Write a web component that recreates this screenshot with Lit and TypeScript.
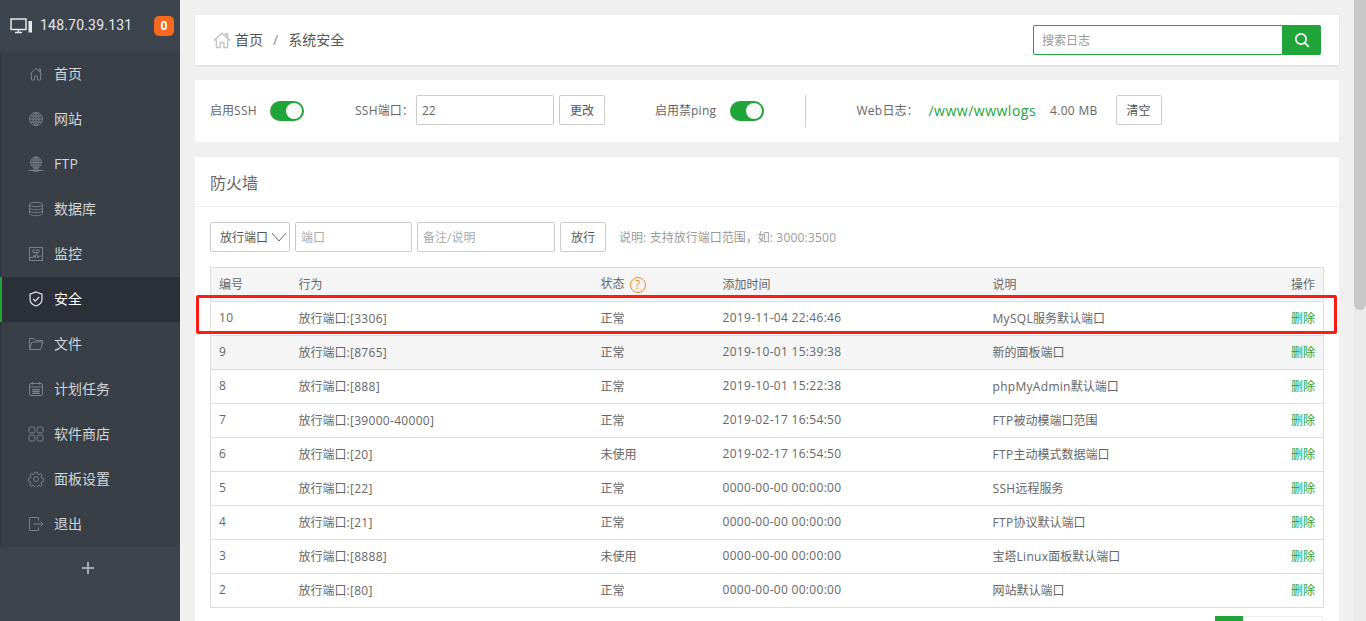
import { LitElement, html, css, svg } from "lit";
import { customElement } from "lit/decorators.js";

const ICONS: Record<string, any> = {
  home: svg`<path d="M1.500 8.500 8 2.500l6.500 6M3.500 7.500v6.500h3v-4h3v4h3V7.500M11 3v2.200l1.500 1.300V3z"/>`,
  globe: svg`<circle cx="8" cy="8" r="6.500"/><ellipse cx="8" cy="8" rx="3" ry="6.500"/><path d="M8 1.500v13M1.500 8h13M2.400 5h11.200M2.400 11h11.200"/>`,
  ftp: svg`<circle cx="8" cy="6.500" r="5.500"/><ellipse cx="8" cy="6.500" rx="2.500" ry="5.500"/><path d="M8 1v11M2.500 6.500h11M3.200 4h9.600M3.200 9h9.600M.5 14.500h15"/><rect x="6" y="12.800" width="4" height="2.400"/>`,
  db: svg`<ellipse cx="8" cy="3.500" rx="6.500" ry="2.200"/><path d="M1.500 3.500v9c0 1.200 2.900 2.200 6.500 2.200s6.500-1 6.500-2.200v-9M1.500 6.500c0 1.200 2.900 2.200 6.500 2.200s6.500-1 6.500-2.200M1.500 9.500c0 1.200 2.900 2.200 6.500 2.200s6.500-1 6.500-2.200"/>`,
  monitor: svg`<rect x="1.500" y="1.500" width="13" height="13"/><path d="M2 11.500h3l1-2.500 1 3 1.500-5 1.500 5 1-2h2.500M5 4h6v2.500H5z"/>`,
  shield: svg`<path d="M8 1 14 3.200v5c0 3.300-2.500 5.500-6 6.800-3.500-1.300-6-3.500-6-6.800v-5z"/><path d="m5 7.800 2.300 2.300L11.200 6"/>`,
  folder: svg`<path d="M1.500 13.500V2.500h4.500l1.500 2h7v1.500M1.500 13.500h11l2.500-7.500H4z"/>`,
  calendar: svg`<rect x="1.500" y="2.500" width="13" height="12" rx="1.500"/><path d="M1.500 6h13M4.500 1v2.500M11.500 1v2.500M4 8.500h8M4 10.500h8M4 12.500h8M6 8v5M8 8v5M10 8v5"/>`,
  apps: svg`<rect x="1" y="1" width="5.800" height="5.800" rx="1.300"/><rect x="9.200" y="1" width="5.800" height="5.800" rx="1.300"/><rect x="1" y="9.200" width="5.800" height="5.800" rx="1.300"/><rect x="9.200" y="9.200" width="5.800" height="5.800" rx="1.300"/>`,
  gear: svg`<circle cx="8" cy="8" r="2.500"/><path d="m6.800 1.200h2.400l.4 1.900 1.400.6 1.700-1 1.500 1.700-1 1.600.6 1.400 1.700.4v2.400l-1.700.4-.6 1.400 1 1.600-1.500 1.700-1.700-1-1.400.6-.4 1.900H6.800l-.4-1.900-1.400-.6-1.700 1-1.500-1.700 1-1.600-.6-1.400-1.700-.4V7.400l1.700-.4.6-1.400-1-1.600 1.500-1.700 1.700 1 1.400-.6z"/>`,
  logout: svg`<path d="M10.500 4.500V1.500h-9v13h9v-3M5.500 8h9.500M12.500 5.500 15 8l-2.500 2.500"/>`,
};

const NAV = [
  ["home", "首页"], ["globe", "网站"], ["ftp", "FTP"], ["db", "数据库"], ["monitor", "监控"],
  ["shield", "安全"], ["folder", "文件"], ["calendar", "计划任务"], ["apps", "软件商店"], ["gear", "面板设置"], ["logout", "退出"],
];

const ROWS = [
  ["10", "放行端口:[3306]", "正常", "2019-11-04 22:46:46", "MySQL服务默认端口"],
  ["9", "放行端口:[8765]", "正常", "2019-10-01 15:39:38", "新的面板端口"],
  ["8", "放行端口:[888]", "正常", "2019-10-01 15:22:38", "phpMyAdmin默认端口"],
  ["7", "放行端口:[39000-40000]", "正常", "2019-02-17 16:54:50", "FTP被动模端口范围"],
  ["6", "放行端口:[20]", "未使用", "2019-02-17 16:54:50", "FTP主动模式数据端口"],
  ["5", "放行端口:[22]", "正常", "0000-00-00 00:00:00", "SSH远程服务"],
  ["4", "放行端口:[21]", "正常", "0000-00-00 00:00:00", "FTP协议默认端口"],
  ["3", "放行端口:[8888]", "未使用", "0000-00-00 00:00:00", "宝塔Linux面板默认端口"],
  ["2", "放行端口:[80]", "正常", "0000-00-00 00:00:00", "网站默认端口"],
];

// Latin runs render slightly wider in the reference; wrap them so only they get tracking.
const t = (s: string) =>
  s.split(/([\x20-\x7e]+)/).map((part) =>
    /^[\x20-\x7e]+$/.test(part) ? html`<span class="lat">${part}</span>` : part
  );

@customElement("app-root")
export class AppRoot extends LitElement {
  static styles = css`
    :host { display: flex; width: 1366px; height: 621px; overflow: hidden; background: #f0f0f0; color: #666;
      font: 12px "Open Sans", "Noto Sans CJK SC", sans-serif; }
    * { box-sizing: border-box; }
    .lat { letter-spacing: .3px; }
    .side { width: 180px; flex: none; background: #3c444d; display: flex; flex-direction: column; }
    .host { height: 52px; display: flex; align-items: center; padding: 0 6px 0 10px; color: #e4e7ea; font-size: 14px; font-family: Roboto, "Noto Sans CJK SC", sans-serif; }
    .host svg { width: 23px; height: 16px; margin-right: 7px; flex: none; }
    .ip { flex: 1; letter-spacing: .2px; padding-bottom: 3px; }
    .badge { flex: none; width: 20px; height: 20px; border-radius: 5px; background: #f7691f; color: #fff; font-weight: 700; font-size: 12px; display: flex; align-items: center; justify-content: center; }
    .nav { display: flex; flex-direction: column; }
    .item { height: 45px; display: flex; align-items: center; padding-left: 26px; background: #383f47; border-left: 2px solid #32383f; color: #d3d6d9; font-size: 14px; }
    .item.on { background: #2c3038; border-left-color: #20a53a; color: #fff; }
    .item svg { width: 16px; height: 16px; margin-right: 10px; flex: none; fill: none; stroke: #7b8086; stroke-width: 1; margin-bottom: 1px; }
    .item.on svg { stroke: #e6e6e6; stroke-width: 1.200; }
    .item .lbl { padding-bottom: 3px; }
    .plus { height: 44px; display: flex; align-items: center; justify-content: center; padding: 0 5px 2px 0; }
    .plus svg { width: 14px; height: 14px; }

    .main { flex: 1; padding: 15px; display: flex; flex-direction: column; gap: 15px; min-width: 0; }
    .card { background: #fff; flex: none; }
    .crumb { height: 50px; display: flex; align-items: center; padding: 0 18px 0 17px; box-shadow: 0 1px 2px rgba(0,0,0,.1); color: #555; font-size: 14px; }
    .crumb .hi { width: 20px; height: 20px; margin-right: 3px; fill: none; stroke: #c4c4c4; stroke-width: 1.100; }
    .crumb .tx { padding-bottom: 2px; }
    .crumb .sep { margin: 0 10px; color: #888; }
    .crumb .grow { flex: 1; }
    .search { width: 250px; height: 30px; border: 1px solid #20a53a; border-radius: 2px 0 0 2px; padding: 0 8px; display: flex; align-items: center; color: #999; font-size: 12px; }
    .sbtn { width: 38px; height: 30px; background: #20a53a; border-radius: 0 2px 2px 0; display: flex; align-items: center; justify-content: center; }
    .sbtn svg { width: 16px; height: 16px; fill: none; stroke: #fff; stroke-width: 1.700; }

    .opts { height: 62px; display: flex; align-items: center; padding: 0 0 2px 15px; }
    .sw { width: 34px; height: 20px; border-radius: 10px; background: #20a53a; display: flex; justify-content: flex-end; padding: 2px; box-shadow: 0 1px 1px rgba(0,0,0,.1); flex: none; margin: 2px 0 0 13px; }
    .sw.wide { margin-left: 14px; }
    .sw i { width: 16px; height: 16px; border-radius: 50%; background: #fafafa; display: block; }
    .inp { height: 30px; border: 1px solid #ccc; border-radius: 2px; padding: 0 5px; display: flex; align-items: center; flex: none; }
    .w138 { width: 138px; }
    .w117 { width: 117px; }
    .btn { height: 30px; border: 1px solid #ccc; border-radius: 2px; display: flex; align-items: center; justify-content: center; color: #555; width: 46px; flex: none; }
    .ssh { margin-left: 51px; width: 61px; }
    .ml5 { margin-left: 5px; }
    .ml50 { margin-left: 50px; }
    .weblog { margin-left: 10px; color: #20a53a; font-size: 14px; letter-spacing: .5px; }
    .size { margin-left: 14px; }
    .clear { margin-left: 18px; }
    .divider { width: 1px; height: 32px; background: #ccc; margin: 2px 50px 0 41px; }

    .title { height: 50px; border-bottom: 1px solid #eee; padding-left: 15px; display: flex; align-items: center; font-size: 16px; color: #666; }
    .tools { display: flex; align-items: center; gap: 5px; padding: 15px 15px 0; }
    .select { width: 80px; justify-content: space-between; padding: 0 0 0 9px; color: #555; }
    .select svg { width: 18px; height: 18px; fill: none; stroke: #666; margin-right: 1px; }
    .ph { color: #aaa; }
    .note { color: #999; margin-left: 8px; }
    .note .lat { letter-spacing: .2px; }

    .tablewrap { position: relative; margin: 15px 15px 0; }
    table { width: 100%; border-collapse: collapse; table-layout: fixed; border: 1px solid #ddd; }
    th, td { height: 34px; padding: 0 8px 2px; font-weight: 400; text-align: left; color: #666; border-top: 1px solid #ddd; white-space: nowrap; }
    thead tr, tr.alt { background: #f5f5f5; }
    .c1 { width: 80px; }
    .c2 { width: 302px; }
    .c3 { width: 122px; }
    .c4 { width: 270px; }
    .c6 { width: 60px; }
    .r { text-align: right; }
    td.r { color: #20a53a; }
    .q { display: inline-flex; width: 16px; height: 16px; border: 1px solid #f7891f; border-radius: 50%; color: #f7891f; align-items: center; justify-content: center; font-size: 12px; margin-left: 5px; vertical-align: middle; }
    .mark { position: absolute; left: -14px; top: 28px; width: 1141px; height: 39px; border: 3px solid #fb1c14; border-radius: 2px; pointer-events: none; }
    .pager { display: flex; justify-content: flex-end; margin: 8px 16px 0; }
    .pager b { width: 28px; height: 30px; background: #20a53a; display: block; }
    .pager i { width: 80px; height: 30px; border: 1px solid #eee; display: block; }

    .bar { width: 12px; flex: none; background: #ebebeb; }
    .thumb { height: 310px; background: #c8c8c8; border-radius: 0 0 6px 6px; }
  `;

  render() {
    return html`
      <aside class="side">
        <div class="host">
          <svg viewBox="0 0 23 16" fill="none" stroke="#e8e8e8" stroke-width="1.500"><rect x="1" y="1" width="15" height="10.500"/><path d="M5 14.500h7M8.500 11.500v3"/><rect x="18.500" y="3" width="3.500" height="11.500" fill="#e8e8e8" stroke="none"/></svg>
          <span class="ip">148.70.39.131</span>
          <span class="badge">0</span>
        </div>
        <nav class="nav">
          ${NAV.map(([icon, label]) => html`
            <div class="item ${label === "安全" ? "on" : ""}">
              <svg viewBox="0 0 16 16">${ICONS[icon]}</svg><span class="lbl">${t(label)}</span>
            </div>`)}
        </nav>
        <div class="plus"><svg viewBox="0 0 14 14" fill="#a5a9ad"><path d="M6 1h2v5h5v2H8v5H6V8H1V6h5z"/></svg></div>
      </aside>
      <main class="main">
        <section class="card crumb">
          <svg class="hi" viewBox="0 0 16 16">${ICONS.home}</svg>
          <span class="tx">首页</span><span class="tx sep">/</span><span class="tx">系统安全</span>
          <span class="grow"></span>
          <div class="search">搜索日志</div>
          <div class="sbtn"><svg viewBox="0 0 16 16"><circle cx="7" cy="7" r="5.200"/><path d="m10.800 10.800 4 4"/></svg></div>
        </section>
        <section class="card opts">
          <span>${t("启用SSH")}</span>
          <span class="sw"><i></i></span>
          <span class="ssh">${t("SSH")}端口：</span>
          <div class="inp w138">22</div>
          <div class="btn ml5">更改</div>
          <span class="ml50">${t("启用禁ping")}</span>
          <span class="sw wide"><i></i></span>
          <span class="divider"></span>
          <span>${t("Web")}日志：</span>
          <span class="weblog">/www/wwwlogs</span>
          <span class="size">${t("4.00 MB")}</span>
          <div class="btn clear">清空</div>
        </section>
        <section class="card">
          <div class="title">防火墙</div>
          <div class="tools">
            <div class="inp select">放行端口<svg viewBox="0 0 18 18"><path d="m2 5 7 8 7-8"/></svg></div>
            <div class="inp ph w117">端口</div>
            <div class="inp ph w138">备注/说明</div>
            <div class="btn">放行</div>
            <span class="note">${t("说明: 支持放行端口范围，如: 3000:3500")}</span>
          </div>
          <div class="tablewrap">
            <table>
              <colgroup><col class="c1"><col class="c2"><col class="c3"><col class="c4"><col><col class="c6"></colgroup>
              <thead><tr><th>编号</th><th>行为</th><th>状态<span class="q">?</span></th><th>添加时间</th><th>说明</th><th class="r">操作</th></tr></thead>
              <tbody>
                ${ROWS.map((r, i) => html`<tr class="${i === 1 ? "alt" : ""}">${r.map((c) => html`<td>${t(c)}</td>`)}<td class="r">删除</td></tr>`)}
              </tbody>
            </table>
            <div class="mark"></div>
          </div>
          <div class="pager"><b></b><i></i></div>
        </section>
      </main>
      <div class="bar"><div class="thumb"></div></div>
    `;
  }
}
